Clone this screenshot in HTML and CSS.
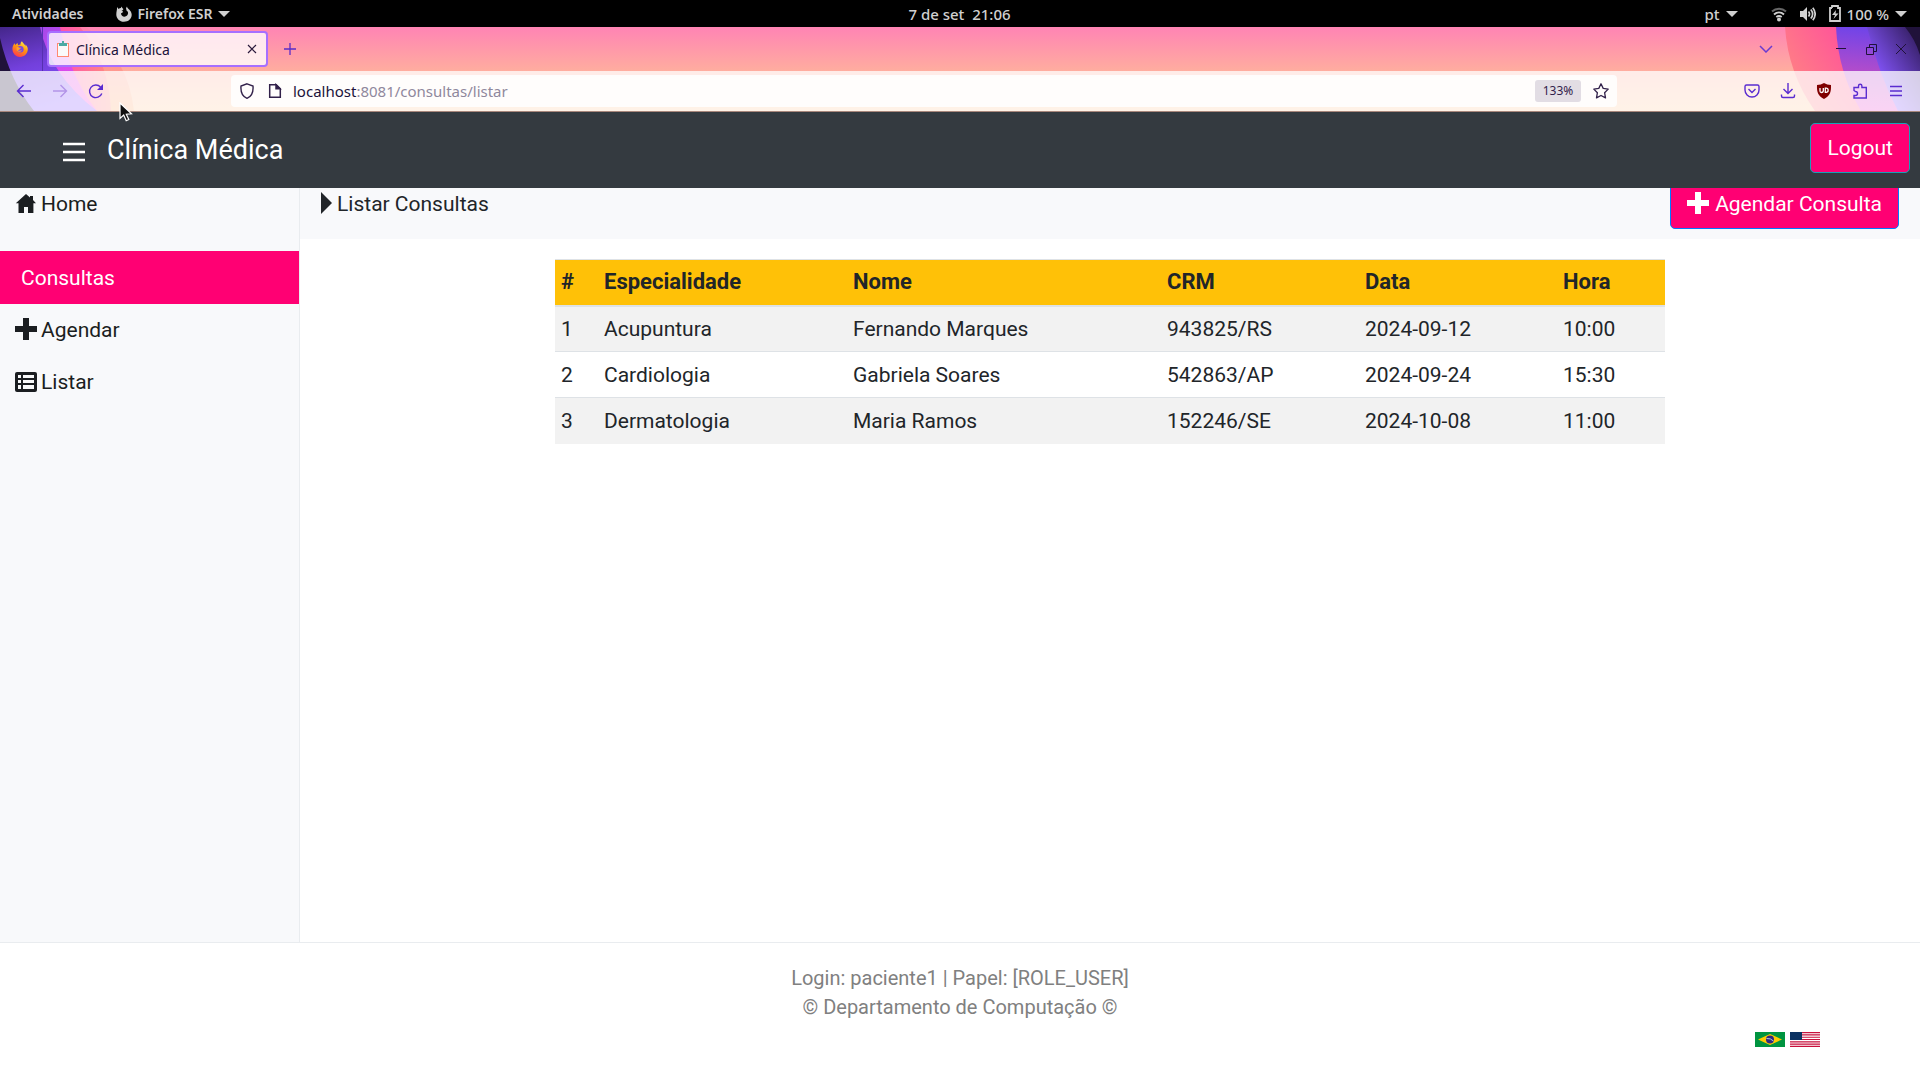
FILE: index.html
```html
<!DOCTYPE html>
<html lang="pt">
<head>
<meta charset="utf-8">
<title>Clínica Médica</title>
<link rel="stylesheet" href="styles.css">
</head>
<body>
<div class="desktop-bar">
  <div class="bar-left">
    <span>Atividades</span>
    <span class="bar-app">
      <svg width="16" height="16" viewBox="0 0 16 16"><path fill="#d0d0d0" d="M1 1l1.600 2C3.300 2.300 4 2 4.800 2l.9-1.500c.3 1.200.8 1.900 1.700 2.400-.4 1-1 1.500-1.900 1.900l1.600.8c-.3 1.200-1.400 1.300-2.100 2 .1 2 1.600 3.100 3.400 3.100 2.300 0 3.700-1.700 3.700-3.600 0-1.400-.7-2.200-1.700-2.700l.2-.3C9.800 2.900 9.900 1.600 11 .4c.1 1.700 1.300 2.100 2.400 3.300 1 1 2.300 2.700 2.300 5.100 0 4.200-3.400 7-7.700 7C3.600 15.800.3 12.500.3 8.500.3 5.600 1.200 4 1 1z"/></svg>
      <span>Firefox ESR</span><i class="caret"></i>
    </span>
  </div>
  <div class="bar-clock">7 de set&nbsp; 21:06</div>
  <div class="bar-right">
    <span class="bar-lang">pt<i class="caret"></i></span>
    <svg width="16" height="16" viewBox="0 0 16 16" fill="none" stroke="#d0d0d0" stroke-width="2"><path stroke="#666" d="M1 5.500C5 1.800 11 1.800 15 5.500"/><path d="M3 8.500c3-2.600 7-2.600 10 0M5.300 11c1.700-1.200 3.700-1.200 5.400 0"/><circle cx="8" cy="13.500" r="1" fill="#d0d0d0"/></svg>
    <svg width="16" height="16" viewBox="0 0 16 16"><path fill="#d0d0d0" d="M0 5h3l4-4v14l-4-4H0z"/><path fill="none" stroke="#d0d0d0" stroke-width="1.700" d="M8.500 5.500c1.300 1.600 1.300 3.400 0 5M10.800 3.500c2.300 2.800 2.300 6.200 0 9M12.800 1.700c3 4 3 8.600 0 12.600"/></svg>
    <span class="bar-battery">
      <svg width="12" height="18" viewBox="0 0 12 18"><path fill="none" stroke="#d0d0d0" stroke-width="1.800" d="M3 3V1h6v2h2v13H1V3h2"/><path fill="#d0d0d0" d="M7 5L3 10h3l-1.500 4L9.500 8.500h-3z"/></svg>
      <span>100 %</span><i class="caret"></i>
    </span>
  </div>
</div>

<div class="browser">
  <svg class="theme theme-left" width="150" height="84" viewBox="0 0 150 84">
    <defs>
      <linearGradient id="la" x1="0" y1="0" x2="0.300" y2="1"><stop offset="0" stop-color="#44268a"/><stop offset=".5" stop-color="#7340dc"/><stop offset="1" stop-color="#8554ff"/></linearGradient>
      <linearGradient id="lb" x1="0" y1="0" x2="1" y2="1"><stop offset="0" stop-color="#8145e4"/><stop offset=".5" stop-color="#d04bf0"/><stop offset="1" stop-color="#ff4ad5"/></linearGradient>
      <linearGradient id="lc"><stop offset="0" stop-color="#ff33a0"/><stop offset=".6" stop-color="#ff5aa6"/><stop offset="1" stop-color="#ff8a80"/></linearGradient>
      <linearGradient id="ld" x1="0" y1="0" x2="0" y2="1"><stop offset="0" stop-color="#ff80ad"/><stop offset="1" stop-color="#ffb074"/></linearGradient>
    </defs>
    <path fill="url(#ld)" d="M0 0H86Q128 30 134 84H0z"/>
    <path fill="url(#lc)" d="M0 0H80Q109 34 111 84H0z"/>
    <path fill="url(#lb)" d="M0 0H60Q70 50 97 84H0z"/>
    <path fill="url(#la)" d="M0 0H40Q50 48 97 84H0z"/>
    <path fill="#20123a" d="M0 11Q10 54 34 84H0z"/>
  </svg>
  <svg class="theme" width="180" height="84" viewBox="0 0 180 84">
    <defs>
      <linearGradient id="ra" x1="0" y1=".4" x2="1" y2="0"><stop offset="0" stop-color="#ff7d86"/><stop offset=".6" stop-color="#ff4a9e"/><stop offset="1" stop-color="#ff3fa0"/></linearGradient>
      <linearGradient id="rb" x1=".2" y1="0" x2=".1" y2="1"><stop offset="0" stop-color="#7044e8"/><stop offset=".5" stop-color="#b04ccc"/><stop offset="1" stop-color="#f04ad0"/></linearGradient>
      <linearGradient id="rc" x1="1" y1="0" x2=".3" y2=".7"><stop offset="0" stop-color="#2b1850"/><stop offset="1" stop-color="#8656ff"/></linearGradient>
    </defs>
    <path fill="url(#ra)" d="M45 0Q48 46 75 84H180V0z"/>
    <path fill="url(#rb)" d="M96 0Q98 45 121 84H180V0z"/>
    <path fill="url(#rc)" d="M127 0Q139 48 158 84H180V0z"/>
    <path fill="#20123a" d="M165 0Q175 12 180 28V0z"/>
  </svg>

  <div class="tab-strip">
    <div class="pinned">
      <svg width="16" height="16" viewBox="0 0 16 16">
        <defs><linearGradient id="fx" x1=".8" y1="0" x2=".3" y2="1"><stop offset="0" stop-color="#fff44f"/><stop offset=".45" stop-color="#ff980e"/><stop offset="1" stop-color="#ff3750"/></linearGradient></defs>
        <path fill="url(#fx)" d="M15.500 6.500c-.5-1.200-1.300-2.300-2.300-2.900.4.800.6 1.400.7 2-.9-2.300-2.700-3-4-5.400-1 .8-1.500 2.200-1.400 3.400-1 0-1.600.3-2.100.7-.6-.5-.9-1.200-.8-2.200-1 .5-1.700 1.300-2.200 2-.4-.4-.6-1-.5-1.900C1.300 3.500.4 5.600.4 8.300A7.700 7.700 0 0 0 8 16c4.300 0 7.800-3.400 7.800-7.700 0-.6-.1-1.200-.3-1.800z"/>
        <circle cx="8.300" cy="8.300" r="3.300" fill="#7a48e0"/>
        <path fill="#ffa02a" d="M4.500 6.500c1.200-.8 2.500-.4 3 .2h1.800c-.2.800-1.300 1-1.600 1.300-.2.900-.8 1-1.700.9.600 1.200 2.800 1.300 3.900.2-.5 2.400-4.500 2.400-5.300-.3z"/>
      </svg>
    </div>
    <div class="tab">
      <svg width="14" height="18" viewBox="0 0 14 18"><path fill="#ff8a70" d="M1 3h12v14H1z"/><path fill="#fafafa" d="M2 4h10v12H2z"/><path fill="#4caaa4" d="M3 3h3V1h2v2h3v3H3z"/></svg>
      <span class="tab-title">Clínica Médica</span>
      <button class="plain" aria-label="Fechar aba"><svg width="10" height="10" viewBox="0 0 10 10" stroke="#2a1a3c" stroke-width="1.200"><path d="M1 1l8 8M9 1L1 9"/></svg></button>
    </div>
    <button class="plain new-tab" aria-label="Nova aba"><svg width="12" height="12" viewBox="0 0 12 12" stroke="#5a2cc8" stroke-width="1.300"><path d="M6 0v12M0 6h12"/></svg></button>
    <div class="window-buttons">
      <button class="plain win-list" aria-label="Listar abas"><svg width="14" height="8" viewBox="0 0 14 8" fill="none" stroke="#6b3bd0" stroke-width="1.500"><path d="M1 1l6 6 6-6"/></svg></button>
      <button class="plain" aria-label="Minimizar"><svg width="10" height="10" viewBox="0 0 10 10" stroke="#20123a"><path d="M0 4.500h10"/></svg></button>
      <button class="plain" aria-label="Restaurar"><svg width="11" height="11" viewBox="0 0 11 11" fill="none" stroke="#20123a"><path d="M.5 3.500h7v7h-7zM3.500 3.500v-3h7v7h-3"/></svg></button>
      <button class="plain" aria-label="Fechar"><svg width="10" height="10" viewBox="0 0 10 10" stroke="#20123a"><path d="M0 0l10 10M10 0L0 10"/></svg></button>
    </div>
  </div>

  <div class="toolbar">
    <button class="plain tool" aria-label="Voltar"><svg width="16" height="16" viewBox="0 0 16 16" fill="none" stroke="#5a2cd0" stroke-width="1.400"><path d="M15 8H1.500M7.500 2l-6 6 6 6"/></svg></button>
    <button class="plain tool" aria-label="Avançar"><svg width="16" height="16" viewBox="0 0 16 16" fill="none" stroke="#b294e8" stroke-width="1.400"><path d="M1 8h13.500M8.500 2l6 6-6 6"/></svg></button>
    <button class="plain tool" aria-label="Recarregar"><svg width="16" height="16" viewBox="0 0 16 16" fill="none" stroke="#5a2cd0" stroke-width="1.400"><path d="M13.800 10.500A6.300 6.300 0 1 1 12.500 4"/><path fill="#5a2cd0" stroke="none" d="M15 1v6H9z"/></svg></button>
    <div class="url-bar">
      <svg width="16" height="16" viewBox="0 0 16 16" fill="none" stroke="#32214a" stroke-width="1.400"><path d="M8 .8l6 2.200c.5 6-1.500 10.500-6 12.300C3.500 13.500 1.500 9 2 3z"/></svg>
      <svg class="page-icon" width="16" height="16" viewBox="0 0 16 16" fill="none" stroke="#32214a" stroke-width="1.500"><path d="M2.700 1.700h6.500l4.100 4v8.600H2.700z"/><path fill="#32214a" d="M9 1.700v4h4z"/></svg>
      <span class="url"><b>localhost</b>:8081/consultas/listar</span>
      <button class="zoom">133%</button>
      <svg width="16" height="16" viewBox="0 0 16 16" fill="none" stroke="#32214a" stroke-width="1.300" stroke-linejoin="round"><path d="M8 .8l2.200 4.600 5 .7-3.600 3.600.9 5.200L8 12.500l-4.500 2.400.9-5.200L.8 6.100l5-.7z"/></svg>
    </div>
    <button class="plain tool" aria-label="Pocket"><svg width="16" height="16" viewBox="0 0 16 16" fill="none" stroke="#5a2cd0" stroke-width="1.400"><path d="M2.500 2h11q1.500 0 1.500 1.500V7A7 7 0 0 1 1 7V3.500Q1 2 2.500 2z"/><path d="M4.500 6L8 9.500 11.500 6"/></svg></button>
    <button class="plain tool" aria-label="Downloads"><svg width="16" height="16" viewBox="0 0 16 16" fill="none" stroke="#5a2cd0" stroke-width="1.400"><path d="M8 0v10M3.500 6L8 10.500 12.500 6M1.500 11.500V13q0 1.500 1.500 1.500h10q1.500 0 1.500-1.500v-1.500"/></svg></button>
    <button class="plain tool" aria-label="uBlock Origin"><svg width="16" height="16" viewBox="0 0 16 16"><path fill="#800000" d="M8 0q3 2 7 2c.3 7-1 11-7 14C2 13 .7 9 1 2q4 0 7-2z"/><path fill="none" stroke="#fff" stroke-width="1.300" d="M4 5v3q0 1.500 1.500 1.500T7.300 8V5M9.300 5.200v4.100h.8a2 2 0 0 0 0-4.100z"/></svg></button>
    <button class="plain tool" aria-label="Extensões"><svg width="16" height="16" viewBox="0 0 16 16" fill="none" stroke="#5a2cd0" stroke-width="1.400"><path d="M2 7.500V4.500h4.500V3a1.700 1.700 0 0 1 3.400 0v1.500h4.400V15H2v-2.500h1.500a1.500 1.500 0 0 0 0-4z"/></svg></button>
    <button class="plain tool" aria-label="Menu"><svg width="14" height="12" viewBox="0 0 14 12" stroke="#5a2cd0" stroke-width="1.400"><path d="M1 1.500h12M1 6h12M1 10.500h12"/></svg></button>
  </div>
</div>

<header class="navbar">
  <button class="plain menu-toggle" aria-label="Abrir menu"><svg width="22" height="20" viewBox="0 0 22 20" stroke="#fff" stroke-width="2.400"><path d="M0 2h22M0 10h22M0 18h22"/></svg></button>
  <a class="brand" href="#">Clínica Médica</a>
  <button class="btn btn-logout">Logout</button>
</header>

<div class="layout">
  <nav class="sidebar">
    <a class="side-link side-home" href="#"><svg width="22" height="22" viewBox="0 0 22 22"><path fill="#1b1e21" d="M11 1l4 3.500V3h3v4l3 3.200h-2.600V20H13v-6H9v6H3.500v-9.800H.8z"/></svg>Home</a>
    <div class="side-title">Consultas</div>
    <a class="side-link" href="#"><svg class="icon-plus" width="22" height="22" viewBox="0 0 22 22"><path fill="#1b1e21" d="M8 0h6v8h8v6h-8v8H8v-8H0V8h8z"/></svg>Agendar</a>
    <a class="side-link" href="#"><svg width="22" height="22" viewBox="0 0 22 22"><rect x="0" y="1" width="22" height="20" rx="2" fill="#1b1e21"/><path fill="#f8f9fa" d="M3 4h3v3H3zM8 4h11v3H8zM3 9h3v3H3zM8 9h11v3H8zM3 14h3v4H3zM8 14h11v4H8z"/></svg>Listar</a>
  </nav>
  <main class="main">
    <div class="page-head">
      <h1 class="page-title"><svg class="icon-plus" width="11" height="22" viewBox="0 0 11 22"><path fill="#212529" d="M0 0l11 11L0 22z"/></svg>Listar Consultas</h1>
      <button class="btn btn-add"><svg class="icon-plus" width="22" height="22" viewBox="0 0 22 22"><path fill="#fff" d="M8 0h6v8h8v6h-8v8H8v-8H0V8h8z"/></svg>Agendar Consulta</button>
    </div>
    <table class="grid">
      <colgroup><col class="c-id"><col class="c-spec"><col class="c-name"><col class="c-mid"><col class="c-mid"><col></colgroup>
      <thead><tr><th>#</th><th>Especialidade</th><th>Nome</th><th>CRM</th><th>Data</th><th>Hora</th></tr></thead>
      <tbody>
        <tr><td>1</td><td>Acupuntura</td><td>Fernando Marques</td><td>943825/RS</td><td>2024-09-12</td><td>10:00</td></tr>
        <tr><td>2</td><td>Cardiologia</td><td>Gabriela Soares</td><td>542863/AP</td><td>2024-09-24</td><td>15:30</td></tr>
        <tr><td>3</td><td>Dermatologia</td><td>Maria Ramos</td><td>152246/SE</td><td>2024-10-08</td><td>11:00</td></tr>
      </tbody>
    </table>
  </main>
</div>

<footer class="footer">
  <p>Login: paciente1 | Papel: [ROLE_USER]</p>
  <p>© Departamento de Computação ©</p>
  <div class="flags">
    <a href="#" aria-label="Português"><svg width="30" height="15" viewBox="0 0 30 15"><path fill="#009440" d="M0 0h30v15H0z"/><path fill="#ffcb00" d="M15 2l12 5.500L15 13 3 7.500z"/><circle cx="15" cy="7.500" r="4" fill="#302681"/><path fill="none" stroke="#b8cfd0" d="M11.500 6.500q4-.5 7 2.500"/></svg></a>
    <a href="#" aria-label="English"><svg width="30" height="15" viewBox="0 0 30 15"><path fill="#fff" d="M0 0h30v15H0z"/><path stroke="#c8103c" stroke-width="1.150" d="M0 .6h30M0 2.900h30M0 5.200h30M0 7.500h30M0 9.800h30M0 12.100h30M0 14.400h30"/><path fill="#0a3161" d="M0 0h12v8H0z"/></svg></a>
  </div>
</footer>

<svg class="cursor" width="14" height="20" viewBox="0 0 14 20"><path fill="#111" stroke="#fff" stroke-width="1.200" d="M1 1v15.500l3.700-3.400 2.500 5.600 2.600-1.200-2.500-5.300 5.200-.4z"/></svg>
</body>
</html>
```
FILE: styles.css
```css
* { box-sizing: border-box; }
body {
  margin: 0;
  min-height: 100vh;
  display: flex;
  flex-direction: column;
  font-family: Roboto, "Liberation Sans", sans-serif;
  font-size: 21px;
  line-height: 32px;
  color: #212529;
  background: #fff;
}
svg { display: block; flex: none; }
a { color: inherit; text-decoration: none; }
button { font: inherit; cursor: pointer; }
.plain { display: flex; align-items: center; justify-content: center; padding: 0; border: 0; background: none; }

/* desktop bar */
.desktop-bar {
  height: 27px;
  display: grid;
  grid-template-columns: 1fr auto 1fr;
  align-items: center;
  padding: 0 13px 0 12px;
  background: #000;
  color: #d0d0d0;
  font-family: "Noto Sans", sans-serif;
  font-size: 14px;
  font-weight: 600;
  line-height: 20px;
}
.bar-left, .bar-right, .bar-app, .bar-lang, .bar-battery { display: flex; align-items: center; }
.bar-left { gap: 33px; }
.bar-app { gap: 5px; }
.bar-clock, .bar-right { font-size: 15px; font-weight: 500; }
.bar-right { justify-content: flex-end; gap: 13px; }
.bar-lang { gap: 6px; margin-right: 20px; }
.bar-battery { gap: 6px; }
.caret { border: 6px solid transparent; border-top-color: #d0d0d0; border-bottom: 0; }

/* browser chrome */
.browser {
  position: relative;
  background: linear-gradient(#ff84b4, #ffad9f 44px, #ffcc9c);
  font-family: "Noto Sans", sans-serif;
  font-size: 14px;
  line-height: 20px;
  color: #20123a;
}
.theme { position: absolute; top: 0; right: 0; }
.theme-left { left: 0; right: auto; }
.tab-strip { position: relative; height: 44px; display: flex; align-items: center; }
.pinned {
  width: 43px;
  height: 44px;
  display: flex;
  align-items: center;
  padding-left: 12px;
  border-right: 1px solid #5630b0;
}
.tab {
  width: 221px;
  height: 36px;
  margin-left: 4px;
  padding: 0 9px 0 7px;
  display: flex;
  align-items: center;
  gap: 6px;
  border: 2px solid #a66fff;
  border-radius: 4px;
  background: rgba(255, 255, 255, .8);
}
.tab-title { flex: 1; padding-top: 1px; }
.new-tab { width: 32px; height: 32px; margin-left: 6px; }
.window-buttons { display: flex; margin-left: auto; padding-right: 4px; }
.window-buttons .plain { width: 30px; height: 32px; }
.window-buttons .win-list { margin-right: 45px; }
.toolbar {
  position: relative;
  height: 41px;
  display: flex;
  align-items: center;
  padding: 0 6px;
  border-bottom: 1px solid #a8877c;
  background: rgba(255, 255, 255, .76);
}
.tool { width: 36px; height: 32px; }
.url-bar {
  flex: 1;
  height: 32px;
  margin: 0 117px;
  padding: 0 8px;
  display: flex;
  align-items: center;
  border-radius: 4px;
  background: rgba(255, 255, 255, .85);
}
.page-icon { margin: 0 10px 0 12px; }
.url { flex: 1; color: #8f889c; font-size: 15px; }
.url b { font-weight: 400; color: #20123a; }
.zoom {
  width: 46px;
  height: 22px;
  margin-right: 12px;
  padding: 0;
  border: 0;
  border-radius: 3px;
  background: #e2dde4;
  color: #32214a;
  font-size: 12px;
  line-height: 22px;
}

/* application */
.navbar {
  position: relative;
  z-index: 1;
  height: 76px;
  display: flex;
  align-items: center;
  padding: 0 10px 0 63px;
  background: #343a40;
  color: #fff;
}
.menu-toggle { padding-top: 4px; }
.brand { margin: 0 auto 0 22px; font-size: 27px; }
.btn {
  height: 50px;
  display: flex;
  align-items: center;
  gap: 6px;
  padding: 0 16px;
  border: 1px solid #007bff;
  border-radius: 5px;
  background: #ff0073;
  color: #fff;
}
.btn-logout { margin-bottom: 4px; border-color: #17a2b8; }
.icon-plus { margin-bottom: 3px; }
.layout { flex: 1; display: flex; margin-top: -19px; }
.sidebar {
  width: 300px;
  border-right: 1px solid #e9ecef;
  background: #f8f9fb;
  color: #1b1e21;
}
.side-link { height: 52px; display: flex; align-items: center; gap: 4px; padding: 0 15px; }
.side-home { margin: 9px 0 21px; }
.side-title { height: 53px; padding: 11px 21px 10px; background: #ff0073; color: #fff; }
.main { flex: 1; }
.page-head {
  height: 70px;
  display: flex;
  align-items: center;
  justify-content: space-between;
  padding: 0 21px;
  background: #f8f9fb;
}
.page-title { display: flex; align-items: center; gap: 5px; margin: 0; font-size: inherit; font-weight: 400; }
.grid {
  width: calc(100% - 42px);
  max-width: 1110px;
  margin: 20px auto 0;
  border-collapse: collapse;
  table-layout: fixed;
}
.grid th, .grid td { height: 46px; padding: 6px; text-align: left; border-top: 1px solid #dee2e6; }
.grid th { font-size: 22px; font-weight: 700; background: #ffc107; border-bottom: 2px solid #dee2e6; }
.grid tbody tr:nth-child(odd) { background: #f2f2f2; }
.c-id { width: 43px; }
.c-spec { width: 249px; }
.c-name { width: 314px; }
.c-mid { width: 198px; }
.footer {
  border-top: 1px solid #e9ecef;
  padding: 21px 100px 0;
  height: 138px;
  color: #808080;
  font-size: 20px;
  line-height: 29px;
  text-align: center;
}
.footer p { margin: 0; }
.flags { display: flex; justify-content: flex-end; gap: 5px; margin-top: 10px; }
.cursor { position: absolute; left: 119px; top: 102px; z-index: 2; }
```
